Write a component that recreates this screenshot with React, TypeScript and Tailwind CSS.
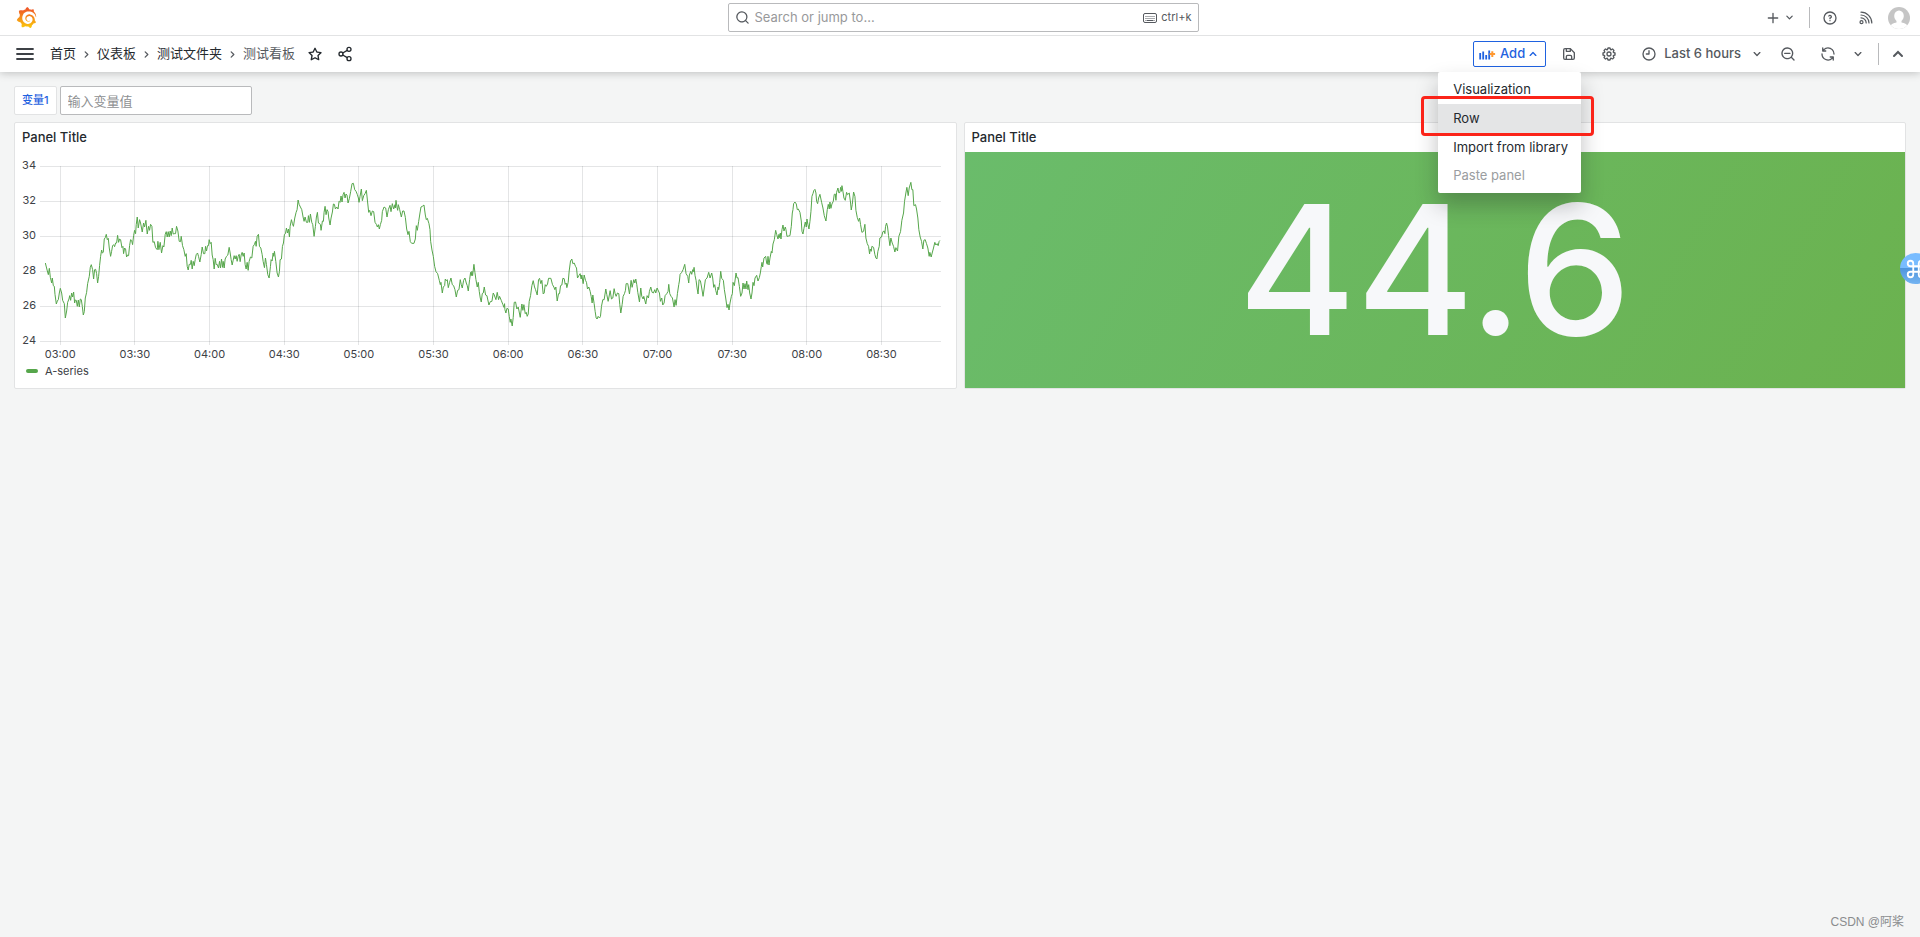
import type { ReactNode } from "react";
import { Command, Share2 } from "lucide-react";
import { SiGrafana } from "react-icons/si";

const ICONS = {
  angleDown:
    "M17,9.17a1,1,0,0,0-1.41,0L12,12.71,8.46,9.17a1,1,0,0,0-1.41,0,1,1,0,0,0,0,1.42l4.24,4.24a1,1,0,0,0,1.42,0L17,10.59A1,1,0,0,0,17,9.17Z",
  angleUp:
    "M17,13.41,12.71,9.17a1,1,0,0,0-1.42,0L7.05,13.41a1,1,0,0,0,0,1.42,1,1,0,0,0,1.41,0L12,11.29l3.54,3.54a1,1,0,0,0,.7.29,1,1,0,0,0,.71-.29A1,1,0,0,0,17,13.41Z",
  angleRight:
    "M14.83,11.29,10.59,7.05a1,1,0,0,0-1.42,0,1,1,0,0,0,0,1.41L12.71,12,9.17,15.54a1,1,0,0,0,0,1.41,1,1,0,0,0,1.42,0l4.24-4.24A1,1,0,0,0,14.83,11.29Z",
  search:
    "M21.71,20.29,18,16.61A9,9,0,1,0,16.61,18l3.68,3.68a1,1,0,0,0,1.42,0A1,1,0,0,0,21.71,20.29ZM11,18a7,7,0,1,1,7-7A7,7,0,0,1,11,18Z",
  zoomOut:
    "M21.71,20.29,18,16.61A9,9,0,1,0,16.61,18l3.68,3.68a1,1,0,0,0,1.42,0A1,1,0,0,0,21.71,20.29ZM11,18a7,7,0,1,1,7-7A7,7,0,0,1,11,18ZM15,10H7a1,1,0,0,0,0,2h8a1,1,0,0,0,0-2Z",
  plus: "M19,11H13V5a1,1,0,0,0-2,0v6H5a1,1,0,0,0,0,2h6v6a1,1,0,0,0,2,0V13h6a1,1,0,0,0,0-2Z",
  question:
    "M11.29,15.29a1.58,1.58,0,0,0-.12.15.76.76,0,0,0-.09.18.64.64,0,0,0-.06.18,1.36,1.36,0,0,0,0,.2.84.84,0,0,0,.08.38.9.9,0,0,0,.54.54.94.94,0,0,0,.76,0,.9.9,0,0,0,.54-.54A1,1,0,0,0,13,16a1,1,0,0,0-.29-.71A1,1,0,0,0,11.29,15.29ZM12,2A10,10,0,1,0,22,12,10,10,0,0,0,12,2Zm0,18a8,8,0,1,1,8-8A8,8,0,0,1,12,20ZM12,7A3,3,0,0,0,9.4,8.5a1,1,0,1,0,1.73,1A1,1,0,0,1,12,9a1,1,0,0,1,0,2,1,1,0,0,0-1,1v1a1,1,0,0,0,2,0v-.18A3,3,0,0,0,12,7Z",
  save: "M20.71,9.29l-6-6a1,1,0,0,0-.32-.21A1.09,1.09,0,0,0,14,3H6A3,3,0,0,0,3,6V18a3,3,0,0,0,3,3H18a3,3,0,0,0,3-3V10A1,1,0,0,0,20.71,9.29ZM9,5h4V7H9Zm6,14H9V16a1,1,0,0,1,1-1h4a1,1,0,0,1,1,1Zm4-1a1,1,0,0,1-1,1H17V16a3,3,0,0,0-3-3H10a3,3,0,0,0-3,3v3H6a1,1,0,0,1-1-1V6A1,1,0,0,1,6,5H7V8A1,1,0,0,0,8,9h6a1,1,0,0,0,1-1V6.41l4,4Z",
  cog: "M21.32,9.55l-1.89-.63.89-1.78A1,1,0,0,0,20.13,6L18,3.87a1,1,0,0,0-1.15-.19l-1.78.89-.63-1.89A1,1,0,0,0,13.5,2h-3a1,1,0,0,0-.95.68L8.92,4.57,7.14,3.68A1,1,0,0,0,6,3.87L3.87,6a1,1,0,0,0-.19,1.15l.89,1.78-1.89.63A1,1,0,0,0,2,10.5v3a1,1,0,0,0,.68.95l1.89.63-.89,1.78A1,1,0,0,0,3.87,18L6,20.13a1,1,0,0,0,1.15.19l1.78-.89.63,1.89a1,1,0,0,0,.95.68h3a1,1,0,0,0,.95-.68l.63-1.89,1.78.89A1,1,0,0,0,18,20.13L20.13,18a1,1,0,0,0,.19-1.15l-.89-1.78,1.89-.63A1,1,0,0,0,22,13.5v-3A1,1,0,0,0,21.32,9.55ZM20,12.78l-1.2.4A2,2,0,0,0,17.64,16l.57,1.14-1.1,1.1L16,17.64a2,2,0,0,0-2.79,1.16l-.4,1.2H11.22l-.4-1.2A2,2,0,0,0,8,17.64l-1.14.57-1.1-1.1L6.36,16A2,2,0,0,0,5.2,13.18L4,12.78V11.22l1.2-.4A2,2,0,0,0,6.36,8L5.79,6.89l1.1-1.1L8,6.36A2,2,0,0,0,10.82,5.2l.4-1.2h1.56l.4,1.2A2,2,0,0,0,16,6.36l1.14-.57,1.1,1.1L17.64,8a2,2,0,0,0,1.16,2.79l1.2.4ZM12,8a4,4,0,1,0,4,4A4,4,0,0,0,12,8Zm0,6a2,2,0,1,1,2-2A2,2,0,0,1,12,14Z",
  clock:
    "M12,2A10,10,0,1,0,22,12,10,10,0,0,0,12,2Zm0,18a8,8,0,1,1,8-8A8,8,0,0,1,12,20ZM12,6a1,1,0,0,0-1,1v4H8a1,1,0,0,0,0,2h4a1,1,0,0,0,1-1V7A1,1,0,0,0,12,6Z",
  sync: "M19.91,15.51H15.38a1,1,0,0,0,0,2h2.4A8,8,0,0,1,4,12a1,1,0,0,0-2,0,10,10,0,0,0,16.88,7.23V21a1,1,0,0,0,2,0V16.5A1,1,0,0,0,19.91,15.51ZM12,2A10,10,0,0,0,5.12,4.77V3a1,1,0,0,0-2,0V7.5a1,1,0,0,0,1,1h4.5a1,1,0,0,0,0-2H6.22A8,8,0,0,1,20,12a1,1,0,0,0,2,0A10,10,0,0,0,12,2Z",
  star: "M22,9.67A1,1,0,0,0,21.14,9l-5.69-.83L12.9,3a1,1,0,0,0-1.8,0L8.55,8.16,2.86,9a1,1,0,0,0-.81.68,1,1,0,0,0,.25,1l4.13,4-1,5.68A1,1,0,0,0,6.9,21.44L12,18.77l5.1,2.67a.93.93,0,0,0,.46.12,1,1,0,0,0,.59-.19,1,1,0,0,0,.4-1l-1-5.68,4.13-4A1,1,0,0,0,22,9.67Zm-6.15,4a1,1,0,0,0-.29.88l.72,4.2-3.76-2a1.06,1.06,0,0,0-.94,0l-3.76,2,.72-4.2a1,1,0,0,0-.29-.88l-3-3,4.21-.61a1,1,0,0,0,.76-.55L12,5.7l1.88,3.82a1,1,0,0,0,.76.55l4.21.61Z"
};

function Icon({ name, size = 16 }: { name: keyof typeof ICONS; size?: number }) {
  return (
    <svg width={size} height={size} viewBox="0 0 24 24" fill="currentColor" className="shrink-0" aria-hidden="true">
      <path d={ICONS[name]} />
    </svg>
  );
}

function IconButton({ label, children }: { label: string; children: ReactNode }) {
  return (
    <button type="button" aria-label={label} className="flex shrink-0 items-center">
      {children}
    </button>
  );
}

// Series samples as "x,y" pairs, three units per pixel. Each chunk has its own origin.
const SERIES = [
  {
    dx: -135,
    dy: -169,
    points:
      "136,460 139,472 142,484 145,495 148,476 151,503 155,520 157,505 160,528 163,530 165,554 169,583 172,574 175,570 178,550 181,536 185,550 188,572 193,582 196,625 200,604 203,578 207,568 209,558 212,572 215,550 218,562 221,547 224,580 226,571 229,572 232,590 235,571 238,592 241,568 244,570 247,590 250,616 253,606 256,565 260,548 263,522 268,500 271,473 274,465 278,480 281,508 284,480 287,479 290,492 293,520 296,500 299,467 302,440 305,421 307,430 310,428 313,388 316,384 319,374 322,390 325,386 328,415 332,440 335,425 338,408 341,405 344,411 347,400 350,400 353,377 356,398 359,388 362,390 366,414 369,410 371,432 374,415 377,418 380,442 383,436 386,438 389,408 392,390 395,392 398,405 401,378 404,362 407,372 409,345 412,322 415,355 419,330 422,340 427,367 431,340 434,352 438,332 442,373 446,350 449,362 452,344 456,350 459,398 463,396 467,414 472,420 474,395 477,420 481,398 485,430 489,408 492,412 496,374 499,366 502,382 505,366 508,382 511,364 514,378 517,355 520,373 523,372 527,372 530,350 534,364 538,395 542,396 544,380 548,408 552,420 556,440 559,432 562,470 565,481 568,464 572,464 574,452 577,478 580,455 583,468 586,450 589,435 593,430 596,440 600,457 604,435 607,412 611,432 615,432 617,410 620,424 623,408 626,408 628,390 631,402 634,398 637,436 640,450 643,478 646,446 649,465 652,464 656,475 659,455 662,475 665,448 668,473 670,455 673,475 676,448 680,440 684,436 688,413 691,430 694,450 697,466 700,452 703,438 706,448 709,438 712,455 715,440 718,434 721,456 724,436 727,428 730,440 733,430 736,465 739,478 742,458 745,482 748,455 752,442 756,445 760,410 764,404 767,395 769,410 772,380 776,374 779,410 783,415 787,434 790,455 794,474 797,445 800,465 804,495 808,505 812,470 814,450 817,454 820,430 822,440 824,425 828,455 832,490 836,502 839,485 841,450 845,448 848,410 851,400 854,374 857,372 860,355 863,370 866,358 869,382 871,350 875,330 878,342 881,350 885,325 889,308 892,300 895,271 898,284 902,292 906,300 910,322 913,335 916,322 920,338 924,338 926,318 929,338 932,313 936,338 939,345 943,380 947,350 950,322 953,308 956,340"
  },
  {
    dx: 825,
    dy: -49,
    points:
      "0,222 2,225 4,242 8,214 11,215 13,188 16,170 19,195 22,180 25,186 27,205 31,226 34,205 38,187 41,163 44,164 47,178 51,172 55,178 58,155 61,158 64,139 67,157 70,135 73,128 76,145 79,133 82,137 85,160 89,146 93,125 97,102 101,101 105,120 109,125 113,135 116,145 118,158 121,140 125,118 128,153 132,138 136,132 140,122 144,160 147,188 150,182 154,198 158,184 162,186 166,218 170,224 173,232 176,225 179,238 182,225 186,212 188,186 193,172 198,175 202,202 206,180 211,167 214,186 218,162 222,178 226,165 227,175 229,152 232,173 234,182 236,165 240,180 245,202 249,184 253,184 257,203 261,238 265,255 268,245 272,276 276,281 283,281 287,268 290,228 293,242 297,216 301,190 304,172 308,170 313,166 317,196 320,210 323,206 328,222 331,240 333,275 337,301 341,320 345,350 349,366 354,372 359,392 362,405 364,398 368,430 371,412 375,408 377,388 380,393 383,390 386,414 390,398 394,385 398,405 402,408 406,420 410,442 414,422 418,420 422,390 425,405 428,415 432,392 436,385 440,400 443,408 446,424 450,390 453,368 455,378 457,365 459,378 463,344 466,368 469,390 473,412 476,398 479,425 482,445 485,457 488,432 491,430 494,412 498,436 502,438 508,466 512,456 517,455 521,430 524,436 529,450 533,428 537,450 540,440 545,452 550,465 553,473 555,462 556,480 559,490 562,476 566,478 569,500 572,518 574,508 578,529 581,503 584,458 588,457 592,478 596,472 602,503 607,463 610,482 613,465 617,492 620,488 623,500 626,493 629,455 633,438 637,408 641,393 645,412 648,420 653,436 657,390 660,386 664,402 667,392 671,433 674,430 677,405 680,410 684,403 687,386 694,386 699,405 703,412 706,420 709,412 713,454 717,432 720,432 723,408 727,406 730,386 734,387 737,404 740,400 742,414 746,398 749,364 753,334 757,328 760,342 764,340 768,350 771,355 774,385 778,378 782,372 785,388 787,376 791,402 794,376 798,392 801,398 804,418 808,412 812,425 815,440 818,460 820,436 824,462 827,485 830,505 833,508 836,500 840,505 843,500 846,470 850,450 854,450 859,418 862,435 866,455 872,423 876,448 880,445 884,417 887,432 890,440 894,430 898,432 901,465 904,490 908,465 911,440 915,432 918,422 920,402 925,402 930,433 935,392 938,413 943,390 946,400 949,388 952,405 955,428 958,445"
  },
  {
    dx: 1785,
    dy: -49,
    points:
      "0,457 4,415 7,440 11,448 13,440 19,463 23,438 27,445 30,425 34,412 38,428 42,430 46,420 49,430 53,415 57,424 60,430 63,455 67,445 70,466 74,460 77,438 82,432 86,425 88,404 91,432 95,440 99,445 104,472 107,450 110,467 114,432 118,405 120,394 122,374 127,368 131,360 136,344 140,372 145,380 148,400 150,376 154,365 157,374 160,360 162,366 164,353 167,378 170,392 173,415 176,433 179,390 183,393 187,415 191,440 195,412 198,390 203,385 208,368 212,385 217,370 220,385 223,413 226,405 229,422 233,436 236,412 238,420 241,398 244,365 247,386 252,392 255,420 259,445 263,474 266,464 269,481 272,460 276,440 279,432 281,398 285,408 290,370 293,385 296,384 300,410 304,440 308,430 311,400 314,418 317,402 320,418 322,394 326,420 328,405 331,430 335,448 338,430 341,398 344,408 347,385 352,377 356,394 360,384 363,370 366,350 368,338 370,352 374,325 379,320 382,340 384,344 386,320 389,346 392,325 396,305 398,310 401,283 405,270 409,242 412,254 416,268 419,254 421,264 423,250 425,268 428,240 431,226 434,244 438,232 440,240 443,260 448,259 452,258 456,230 459,190 461,180 463,162 467,157 471,163 474,180 477,178 482,188 486,214 488,245 491,253 494,236 498,217 501,232 503,208 506,225 509,238 512,215 515,185 518,140 521,132 524,122 527,119 530,130 532,155 535,162 538,145 542,134 547,158 551,175 555,198 560,214 564,180 567,164 570,178 572,157 575,176 578,163 582,155 585,134 588,133 590,152 592,128 596,115 599,130 602,128 604,113 607,125 608,108 611,125 614,145 618,152 622,128 625,135 630,130 634,160 636,181 639,165 643,127 647,140 650,182 654,203 658,215 661,205 664,225 668,248 673,245 677,224 680,265 684,282 688,290 691,313 693,298 696,305 698,290 703,293 707,315 710,325 713,328 716,305 720,290 722,265 727,262 731,246 735,244 737,252 739,230 742,220 745,232 748,258 752,288 755,265 759,280 763,290 767,307 770,294 775,304 779,260 784,246 788,212 793,190 796,155 800,130 803,113 807,138 810,115 815,98 818,120 821,120 824,168 829,165 832,178 836,205 839,240 843,262 847,275 851,298 854,272 858,270 862,282 866,295 870,320 872,308 876,322 879,310 883,295 887,278 890,286 894,282 897,288 900,275 903,272"
  }
];

const linePoints = SERIES.flatMap(({ dx, dy, points }) =>
  points.split(" ").map((pair) => {
    const [x, y] = pair.split(",").map(Number);
    return `${x + dx},${y + dy}`;
  })
).join(" ");

const yTicks = [34, 32, 30, 28, 26, 24];
const xTicks = ["03:00", "03:30", "04:00", "04:30", "05:00", "05:30", "06:00", "06:30", "07:00", "07:30", "08:00", "08:30"];

function TimeSeries() {
  return (
    <div className="pr-[15px] pl-[30px]">
      <svg className="block h-[209px] w-full overflow-visible" role="img" aria-label="A-series">
        <g stroke="#24292e" strokeOpacity="0.12" shapeRendering="crispEdges">
          {yTicks.map((value, i) => (
            <line key={value} x1="-5" x2="100%" y1={14.5 + i * 35} y2={14.5 + i * 35} />
          ))}
          {xTicks.map((time, i) => {
            const x = `${1.7 + i * 8.337}%`;
            return <line key={time} x1={x} x2={x} y1="14" y2="193" />;
          })}
        </g>
        <svg x="0" y="14" width="100%" height="175" viewBox="0 0 2689 525" preserveAspectRatio="none">
          <polyline points={linePoints} fill="none" stroke="#56a64b" strokeWidth="1" vectorEffect="non-scaling-stroke" />
        </svg>
        <g className="fill-[#3d4146] text-[11px]">
          {yTicks.map((value, i) => (
            <text key={value} x="-9" y={17 + i * 35} textAnchor="end">
              {value}
            </text>
          ))}
          {xTicks.map((time, i) => (
            <text key={time} x={`${1.7 + i * 8.337}%`} y="206" textAnchor="middle">
              {time}
            </text>
          ))}
        </g>
      </svg>
    </div>
  );
}

function Panel({ children }: { children: ReactNode }) {
  return (
    <section className="flex h-[267px] min-w-0 flex-1 flex-col rounded-xs border border-[#e2e3e4] bg-white">
      <h2 className="h-[29px] shrink-0 px-[7px] text-[13px] leading-[29px] font-medium text-[#24292e]">Panel Title</h2>
      {children}
    </section>
  );
}

function Crumb({ children }: { children: ReactNode }) {
  return (
    <li className="flex items-center">
      <a href="#" className="text-[#24292e]">
        {children}
      </a>
      <span className="mx-[3px] text-[#55595e]">
        <Icon name="angleRight" size={15} />
      </span>
    </li>
  );
}

function AddMenu() {
  return (
    <div className="relative">
      <button
        type="button"
        className="flex h-[26px] items-center rounded-xs border border-[#1f62e0] pr-1 pl-[5px] text-[13px] font-medium text-[#1f62e0]"
      >
        <svg width="17" height="15" viewBox="0 0 17 15" className="mr-1" aria-hidden="true">
          <path d="M1.200 6v6.500M4.200 4.500v8M7.200 8v4.500M10.200 3.500v9" stroke="#1f62e0" strokeWidth="1.800" />
          <path d="M13.300 4.300v5.600M10.500 7.100h5.600" stroke="#ff9830" strokeWidth="2" />
        </svg>
        Add
        <Icon name="angleUp" />
      </button>
      <div
        role="menu"
        className="absolute top-[31px] right-[-35px] flex w-[143px] flex-col rounded-xs bg-white py-[3px] text-[13px] whitespace-nowrap text-[#24292e] shadow-[0_12px_22px_rgba(24,26,27,0.28)]"
      >
        <button type="button" role="menuitem" className="h-[29px] px-[15px] text-left">
          Visualization
        </button>
        <div className="relative">
          <button type="button" role="menuitem" className="h-[29px] w-full bg-[#e4e5e6] px-[15px] text-left">
            Row
          </button>
          <div className="pointer-events-none absolute -top-2 -right-[13px] -bottom-[3px] -left-[17px] rounded border-3 border-[#fb2419]" />
        </div>
        <button type="button" role="menuitem" className="h-[29px] px-[15px] text-left">
          Import from library
        </button>
        <button type="button" role="menuitem" disabled className="h-7 px-[15px] text-left text-[#9a9da0]">
          Paste panel
        </button>
      </div>
    </div>
  );
}

function TopBar() {
  return (
    <div className="grid h-9 grid-cols-[1fr_471px_1fr] items-center border-b border-[#e2e3e4] pr-[10px] pl-4 text-[#55595e]">
      <a href="#" aria-label="Grafana" className="w-fit">
        <svg width="0" height="0" className="absolute">
          <linearGradient id="grafana" x1="0" y1="0" x2="0" y2="1">
            <stop offset="0.1" stopColor="#f05a28" />
            <stop offset="1" stopColor="#fbca0a" />
          </linearGradient>
        </svg>
        <SiGrafana size={21} fill="url(#grafana)" />
      </a>
      <div className="flex h-[29px] items-center rounded-xs border border-[#b9babc] pr-[6px] pl-[6px]">
        <Icon name="search" size={15} />
        <input
          type="text"
          aria-label="Search"
          placeholder="Search or jump to..."
          className="ml-[5px] min-w-0 flex-1 text-[13px] outline-none placeholder:text-[#98999b]"
        />
        <svg width="14" height="14" viewBox="0 0 14 14" fill="none" stroke="currentColor" className="mr-1" aria-hidden="true">
          <rect x="0.5" y="2.5" width="13" height="9" rx="1.5" />
          <path d="M2.5 5.5h9M2.5 7.5h9" strokeDasharray="1 1" />
          <path d="M4 9.5h6M2.5 9.5h1M10.5 9.5h1" />
        </svg>
        <span className="text-[11px]">ctrl+k</span>
      </div>
      <div className="flex items-center justify-end">
        <button type="button" aria-label="New" className="flex items-center gap-px">
          <Icon name="plus" />
          <Icon name="angleDown" size={15} />
        </button>
        <span className="mr-3 ml-3 h-[21px] w-px bg-[#b9babc]" />
        <IconButton label="Help">
          <Icon name="question" />
        </IconButton>
        <span className="w-[21px]" />
        <IconButton label="News">
          <svg width="15" height="15" viewBox="0 0 15 15" fill="none" stroke="currentColor" strokeWidth="1.2" strokeLinecap="round">
            <circle cx="2.500" cy="12.200" r="1.500" />
            <path d="M2 7.800a5.200 5.200 0 0 1 5.200 5.200M2 5a8 8 0 0 1 8 8M2 2.200a10.800 10.800 0 0 1 10.800 10.800" />
          </svg>
        </IconButton>
        <span className="w-[14px]" />
        <IconButton label="Profile">
          <svg width="22" height="22" viewBox="0 0 22 22">
            <clipPath id="avatar">
              <circle cx="11" cy="11" r="11" />
            </clipPath>
            <g clipPath="url(#avatar)">
              <rect width="22" height="22" fill="#c5c5c5" />
              <ellipse cx="11" cy="9" rx="4.800" ry="5.600" fill="#fff" />
              <path d="M8.500 13h5v2.500c3 .6 5.500 1.500 6 3.500v3h-17v-3c.5-2 3-2.900 6-3.500z" fill="#fff" />
            </g>
          </svg>
        </IconButton>
      </div>
    </div>
  );
}

function Toolbar() {
  return (
    <div className="flex h-9 items-center pr-[13px] pl-4 text-[#55595e]">
      <button type="button" aria-label="Menu">
        <svg width="18" height="12" viewBox="0 0 18 12" stroke="#3d4146" strokeWidth="1.8" strokeLinecap="round">
          <path d="M1 1h16M1 6h16M1 11h16" />
        </svg>
      </button>
      <nav aria-label="Breadcrumbs" className="ml-4">
        <ol className="flex items-center text-[13px]">
          <Crumb>首页</Crumb>
          <Crumb>仪表板</Crumb>
          <Crumb>测试文件夹</Crumb>
          <li>测试看板</li>
        </ol>
      </nav>
      <div className="ml-3 flex items-center gap-[14px] text-[#24292e]">
        <IconButton label="Star">
          <Icon name="star" />
        </IconButton>
        <IconButton label="Share">
          <Share2 size={16} strokeWidth={2} />
        </IconButton>
      </div>
      <div className="ml-auto flex items-center">
        <AddMenu />
        <div className="ml-[15px] flex items-center gap-6">
          <IconButton label="Save">
            <Icon name="save" />
          </IconButton>
          <IconButton label="Settings">
            <Icon name="cog" />
          </IconButton>
          <button type="button" className="flex items-center text-[13px] font-medium">
            <Icon name="clock" />
            <span className="mr-2 ml-[7px]">Last 6 hours</span>
            <Icon name="angleDown" />
          </button>
        </div>
        <div className="ml-[15px] flex items-center gap-6">
          <IconButton label="Zoom out">
            <Icon name="zoomOut" />
          </IconButton>
          <IconButton label="Refresh">
            <Icon name="sync" />
          </IconButton>
        </div>
        <span className="w-[14px]" />
        <IconButton label="Refresh interval">
          <Icon name="angleDown" />
        </IconButton>
        <span className="mr-[10px] ml-3 h-[22px] w-px bg-[#b9babc]" />
        <IconButton label="Collapse">
          <svg width="18" height="18" viewBox="0 0 18 18" fill="none" stroke="currentColor" strokeWidth="2" strokeLinecap="round">
            <path d="M5 11l4-4 4 4" />
          </svg>
        </IconButton>
      </div>
    </div>
  );
}

export default function App() {
  return (
    <div className="relative min-h-screen overflow-hidden bg-[#f4f5f5] font-['Inter','Noto_Sans_CJK_SC',sans-serif] text-[#24292e]">
      <header className="relative z-10 bg-white shadow-[0_1px_8px_rgba(24,26,27,0.25)]">
        <TopBar />
        <Toolbar />
      </header>

      <main className="px-[14px] pt-[14px]">
        <div className="mb-[7px] flex gap-[3px]">
          <label
            htmlFor="variable"
            className="flex h-[29px] items-center rounded-xs border border-[#e2e3e4] bg-white px-[7px] text-[11px] font-medium text-[#1f62e0]"
          >
            变量1
          </label>
          <input
            id="variable"
            type="text"
            placeholder="输入变量值"
            className="h-[29px] w-48 rounded-xs border border-[#b9babc] bg-white px-[7px] text-[13px] outline-none placeholder:text-[#8e9092]"
          />
        </div>

        <div className="flex gap-[7px]">
          <Panel>
            <TimeSeries />
            <div className="flex h-5 items-center gap-[7px] pl-[11px] text-[11px] text-[#3d4146]">
              <span className="h-1 w-3 rounded-xs bg-[#56a64b]" />
              A-series
            </div>
          </Panel>
          <Panel>
            <div className="flex flex-1 items-center justify-center bg-[linear-gradient(120deg,#6abc6b,#6bb24f)] text-[180px] leading-none font-medium text-[#f7f8fa] [font-optical-sizing:none]">
              44.6
            </div>
          </Panel>
        </div>
      </main>

      <button
        type="button"
        aria-label="Shortcuts"
        className="absolute top-[253px] -right-[11px] flex size-[31px] items-center justify-center rounded-full bg-[linear-gradient(#78bcff_50%,#4f95dc_50%,#74b4f2)] text-white"
      >
        <Command size={22} strokeWidth={2} />
      </button>
      <p className="absolute right-4 bottom-[6px] font-['Liberation_Sans','Noto_Sans_CJK_SC',sans-serif] text-[12px] leading-[18px] text-[#8a8c8e]">
        CSDN @阿桨
      </p>
    </div>
  );
}
